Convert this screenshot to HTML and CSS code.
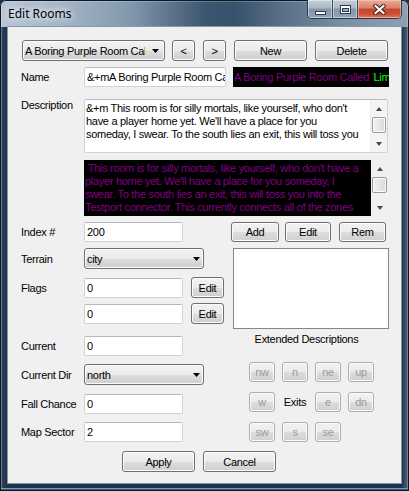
FILE: index.html
```html
<!DOCTYPE html>
<html>
<head>
<meta charset="utf-8">
<title>Edit Rooms</title>
<link rel="stylesheet" href="styles.css">
</head>
<body>
<div class="window">
  <div class="titlebar">
    <span class="title">Edit Rooms</span>
    <div class="caps">
      <div class="cap cap-min"><span class="g-min"></span></div>
      <div class="cap cap-max"><span class="g-max"></span></div>
      <div class="cap cap-close">
        <svg width="13" height="11" viewBox="0 0 13 11"><path d="M2.5 2 L10.5 9 M10.5 2 L2.5 9" stroke="#3a2320" stroke-width="4.2" stroke-linecap="square" fill="none"/><path d="M2.5 2 L10.5 9 M10.5 2 L2.5 9" stroke="#ffffff" stroke-width="2.2" stroke-linecap="square" fill="none"/></svg>
      </div>
    </div>
  </div>
  <div class="client">
    <div class="row r1">
      <div class="btn combo combo-room"><span class="ctext">A Boring Purple Room Called 'Limbo'</span><svg class="arr" width="7" height="4" viewBox="0 0 7 4"><path d="M0 0H7L3.5 4Z" fill="#000"/></svg></div>
      <button class="btn nav nav1">&lt;</button>
      <button class="btn nav nav2">&gt;</button>
      <button class="btn wide w-new">New</button>
      <button class="btn wide w-del">Delete</button>
    </div>
    <div class="row r2">
      <span class="lbl">Name</span>
      <div class="tb tb-name">&amp;+mA Boring Purple Room Called 'Limbo'</div>
      <div class="blackname"><span class="purple">A Boring Purple Room Called '</span><span class="lime">Limbo</span><span class="purple">'</span></div>
    </div>
    <div class="row r3">
      <span class="lbl lbl-top">Description</span>
      <div class="ta">
        <div class="ta-text">
          <div>&amp;+m This room is for silly mortals, like yourself, who don't</div>
          <div>have a player home yet. We'll have a place for you</div>
          <div>someday, I swear. To the south lies an exit, this will toss you</div>
        </div>
        <div class="sb sb-light">
          <div class="sb-btn"><span class="up"></span></div>
          <div class="thumb"></div>
          <div class="sb-fill"></div>
          <div class="sb-btn"><span class="down"></span></div>
        </div>
      </div>
    </div>
    <div class="row r4">
      <span class="lbl"></span>
      <div class="preview">
        <div class="pv-text">
          <div>&nbsp;This room is for silly mortals, like yourself, who don't have a</div>
          <div>player home yet. We'll have a place for you someday, I</div>
          <div>swear. To the south lies an exit, this will toss you into the</div>
          <div>Testport connector. This currently connects all of the zones</div>
          <div>for testing purposes, so if you find a bug, tell a god about it.</div>
        </div>
        <div class="sb">
          <div class="sb-btn"><span class="up"></span></div>
          <div class="thumb"></div>
          <div class="sb-fill"></div>
          <div class="sb-btn"><span class="down"></span></div>
        </div>
      </div>
    </div>
    <div class="cols">
      <div class="left">
        <div class="row f-index"><span class="lbl">Index #</span><div class="tb tb-s">200</div></div>
        <div class="row f-terrain"><span class="lbl">Terrain</span><div class="btn combo combo-s"><span class="ctext">city</span><svg class="arr" width="7" height="4" viewBox="0 0 7 4"><path d="M0 0H7L3.5 4Z" fill="#000"/></svg></div></div>
        <div class="row f-flags1"><span class="lbl">Flags</span><div class="tb tb-s">0</div><button class="btn edit-s">Edit</button></div>
        <div class="row f-flags2"><span class="lbl"></span><div class="tb tb-s">0</div><button class="btn edit-s">Edit</button></div>
        <div class="row f-current"><span class="lbl">Current</span><div class="tb tb-s">0</div></div>
        <div class="row f-curdir"><span class="lbl">Current Dir</span><div class="btn combo combo-s"><span class="ctext">north</span><svg class="arr" width="7" height="4" viewBox="0 0 7 4"><path d="M0 0H7L3.5 4Z" fill="#000"/></svg></div></div>
        <div class="row f-fall"><span class="lbl">Fall Chance</span><div class="tb tb-s">0</div></div>
        <div class="row f-map"><span class="lbl">Map Sector</span><div class="tb tb-s">2</div></div>
      </div>
      <div class="right">
        <div class="row ext-btns">
          <button class="btn e-add">Add</button>
          <button class="btn e-edit">Edit</button>
          <button class="btn e-rem">Rem</button>
        </div>
        <div class="listbox"></div>
        <div class="ext-cap">Extended Descriptions</div>
        <div class="exits">
          <button class="btn dis">nw</button>
          <button class="btn dis">n</button>
          <button class="btn dis">ne</button>
          <button class="btn dis">up</button>
          <button class="btn dis">w</button>
          <span class="exits-lbl">Exits</span>
          <button class="btn dis">e</button>
          <button class="btn dis dn">dn</button>
          <button class="btn dis">sw</button>
          <button class="btn dis">s</button>
          <button class="btn dis">se</button>
        </div>
      </div>
    </div>
    <div class="row bottom">
      <button class="btn wide b-apply">Apply</button>
      <button class="btn wide b-cancel">Cancel</button>
    </div>
  </div>
</div>
</body>
</html>
```
FILE: styles.css
```css
* { box-sizing: border-box; }
html, body { margin: 0; padding: 0; }
body {
  width: 409px; height: 491px; overflow: hidden;
  background: #1c2e42;
  font-family: "Liberation Sans", Arial, sans-serif;
  font-size: 11px; letter-spacing: -0.3px; color: #000;
}
.window {
  width: 409px; height: 491px; overflow: hidden;
  border-radius: 6px 6px 0 0;
  background:
    linear-gradient(to top, #15253a 0, #15253a 2px, #4aa7d0 2px, #4aa7d0 3px, transparent 3px),
    linear-gradient(to right, #b7c7d6 0%, #a6b7c8 14%, #8198ad 32%, #3d5770 50%, #38516a 57%, #5a728a 70%, #7a8fa4 84%, #8ea1b4 100%) top / 100% 27px no-repeat,
    linear-gradient(to right, #7d90a3 0, #2b4158 2px, #1e3249 7px, #1e3249 calc(100% - 7px), #34495f calc(100% - 5px), #50657b 100%);
  box-shadow: inset 0 0 0 1px #0c1824, inset 0 0 0 2px rgba(255,255,255,.22);
}
.titlebar { display: flex; height: 26px; align-items: flex-start; }
.title {
  padding-left: 8px; line-height: 27px;
  font-family: "Noto Sans", "Open Sans", sans-serif; font-size: 12px; letter-spacing: 0;
  color: #000; text-shadow: 0 0 6px rgba(255,255,255,.95), 0 0 10px rgba(255,255,255,.7);
}
.caps {
  margin-left: auto; margin-right: 7px; display: flex; height: 19px;
  border: 1px solid #2b3a4a; border-top: none; border-radius: 0 0 5px 5px; overflow: hidden;
}
.cap { height: 100%; display: flex; align-items: center; justify-content: center; }
.cap-min, .cap-max {
  width: 25px; border-right: 1px solid #3a4859;
  background: linear-gradient(#c3ced9 0%, #aab8c6 45%, #8496a9 50%, #91a3b6 100%);
  box-shadow: inset 0 0 0 1px rgba(255,255,255,.45);
}
.cap-close {
  width: 43px;
  background: linear-gradient(#e9ab99 0%, #db8068 45%, #c5442c 50%, #cf5037 80%, #e3825f 100%);
  box-shadow: inset 0 0 0 1px rgba(255,215,200,.5);
}
.g-min { width: 11px; height: 4px; background: #fff; border: 1px solid #2f3b48; margin-top: 7px; }
.g-max { width: 11px; height: 9px; background: #fff; border: 1px solid #2f3b48; position: relative; }
.g-max::after {
  content: ""; position: absolute; left: 1px; top: 2px; right: 1px; bottom: 1px;
  background: #9eadbd; border: 1px solid #2f3b48;
}

.client {
  margin-left: 7px; width: 395px; height: 458px;
  border: 1px solid #8797a7; background: #f0f0f0;
  padding-left: 13px;
}
.row { display: flex; align-items: center; }
.lbl { width: 63px; flex: none; white-space: nowrap; }

.btn {
  flex: none; height: 21px; padding: 0; margin: 0;
  border: 1px solid #707070; border-radius: 3px;
  background: linear-gradient(#f2f2f2 0%, #ebebeb 50%, #dddddd 51%, #cfcfcf 100%);
  box-shadow: inset 0 0 0 1px #fcfcfc;
  display: flex; align-items: center; justify-content: center;
  font: inherit; letter-spacing: inherit; color: #000;
}
.btn.dis { color: #9a9a9a; border-color: #a9adb1; }
.tb {
  flex: none; height: 20px; background: #fff;
  border: 1px solid #cfd3d8; border-top-color: #b6b9bf; border-radius: 2px;
  padding: 0 2px; display: flex; align-items: center;
  white-space: nowrap; overflow: hidden;
}
.combo { justify-content: flex-start; padding: 0 4px 0 2px; }
.combo .ctext { flex: 1; overflow: hidden; white-space: nowrap; }
.combo .arr { flex: none; }

.r1 { margin-top: 13px; height: 21px; }
.combo-room { width: 143px; margin-left: 1px; padding-right: 5px; }
.combo-room .ctext { margin-right: 7px; }
.nav { width: 23px; }
.nav1 { margin-left: 7px; }
.nav2 { margin-left: 8px; }
.wide { width: 73px; }
.w-new { margin-left: 8px; }
.w-del { margin-left: 8px; }

.r2 { margin-top: 6px; height: 20px; }
.tb-name { width: 142px; }
.blackname {
  margin-left: 7px; width: 156px; height: 20px; background: #000;
  white-space: nowrap; overflow: hidden; padding-left: 1px; line-height: 20px;
}
.purple { color: #800080; }
.lime { color: #00ff00; }

.r3 { margin-top: 12px; height: 54px; align-items: flex-start; }
.lbl-top { line-height: 13px; }
.ta {
  width: 304px; height: 54px; display: flex;
  background: #fff; border: 1px solid #cfd3d8; border-top-color: #b6b9bf; border-radius: 2px;
}
.ta-text { flex: 1; padding: 2px 0 0 1px; line-height: 13px; white-space: nowrap; overflow: hidden; }
.sb { width: 17px; flex: none; display: flex; flex-direction: column; background: #f0f0f0; }
.sb-light { background: #f4f4f4; border-left: 1px solid #ececec; }
.sb-btn { height: 17px; flex: none; display: flex; align-items: center; justify-content: center; }
.sb-fill { flex: 1; }
.thumb {
  height: 16px; margin: 0 1px; flex: none;
  border: 1px solid #9a9a9a; border-radius: 2px;
  background: linear-gradient(to right, #f4f4f4, #e6e6e6 50%, #d8d8d8);
  box-shadow: inset 0 0 0 1px #fbfbfb;
}
.up, .down { width: 0; height: 0; border-left: 3.5px solid transparent; border-right: 3.5px solid transparent; }
.up { border-bottom: 4px solid #4a4a4a; }
.down { border-top: 4px solid #4a4a4a; }

.r4 { margin-top: 7px; height: 56px; }
.preview { width: 304px; height: 56px; display: flex; }
.pv-text {
  flex: 1; background: #000; color: #800080;
  padding: 2px 0 0 1px; line-height: 13px; white-space: nowrap; overflow: hidden;
}

.cols { display: flex; margin-top: 6px; }
.left { width: 210px; flex: none; }
.right { width: 158px; flex: none; }
.tb-s { width: 99px; }
.combo-s { width: 120px; padding-left: 2px; padding-right: 3px; }
.edit-s { width: 33px; margin-left: 8px; }
.f-index { height: 20px; }
.f-terrain { margin-top: 6px; height: 21px; }
.f-flags1 { margin-top: 8px; height: 21px; }
.f-flags2 { margin-top: 5px; height: 21px; }
.f-current { margin-top: 12px; height: 20px; }
.f-curdir { margin-top: 8px; height: 21px; }
.f-fall { margin-top: 9px; height: 20px; }
.f-map { margin-top: 8px; height: 20px; }

.ext-btns { height: 20px; }
.ext-btns .btn { height: 20px; }
.e-add { width: 48px; }
.e-edit { width: 46px; margin-left: 6px; }
.e-rem { width: 47px; margin-left: 8px; }
.listbox { margin: 6px 0 0 2px; width: 156px; height: 81px; background: #fff; border: 1px solid #828790; }
.ext-cap { margin-top: 4px; width: 151px; text-align: center; line-height: 13px; white-space: nowrap; }
.exits {
  display: grid; grid-template-columns: repeat(4, 26px); grid-auto-rows: 20px;
  column-gap: 7px; row-gap: 10px; margin: 16px 0 0 18px;
}
.exits .btn { height: 20px; width: 26px; }
.exits-lbl { display: flex; align-items: center; justify-content: center; }

.bottom { margin-top: 9px; height: 21px; }
.bottom .btn { height: 21px; }
.b-apply { margin-left: 101px; }
.b-cancel { margin-left: 8px; }
```
